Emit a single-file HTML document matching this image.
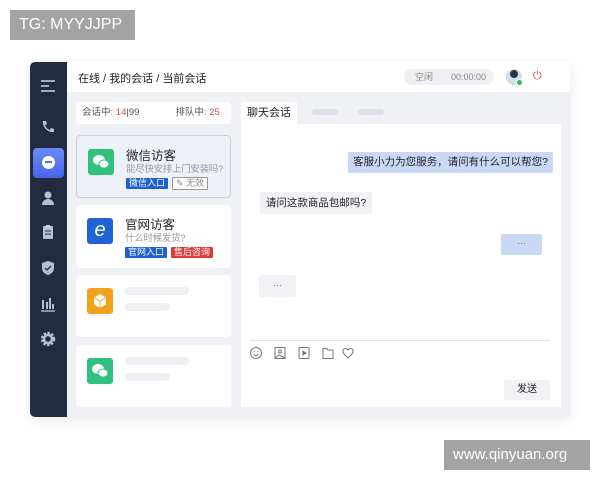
<!DOCTYPE html>
<html><head><meta charset="utf-8"><style>
*{margin:0;padding:0;box-sizing:border-box}
body{width:600px;height:480px;background:#fff;font-family:"Liberation Sans","Noto Sans CJK SC",sans-serif;position:relative;overflow:hidden;color:#333}
.a{position:absolute}
.wm{background:#a3a3a3;color:#fff;font-size:16px;line-height:30px}
.win{left:30px;top:62px;width:540px;height:355px;background:#eff1f5;border-radius:5px;box-shadow:0 4px 14px rgba(0,0,0,.08);overflow:hidden}
.side{left:0;top:0;width:37px;height:355px;background:#222c41}
.card{background:#fff;border-radius:4px;left:46px;width:155px}
.ic{width:26px;height:26px;border-radius:3px;left:11px}
.t1{font-size:12.5px;color:#222;left:49px;white-space:nowrap}
.t2{font-size:9.5px;color:#999;left:49px;white-space:nowrap;letter-spacing:-0.3px}
.tag{font-size:9px;color:#fff;line-height:11px;padding:0 3px;border-radius:1px;white-space:nowrap}
.sk{background:#eef0f3;height:8px;border-radius:4px;left:49px}
.si{left:10px;width:16px;height:16px}
</style></head><body>
<div class="a wm" style="left:10px;top:10px;width:125px;padding-left:9px">TG: MYYJJPP</div>
<div class="a wm" style="left:444px;top:440px;width:146px;padding-left:9px;font-size:15px">www.qinyuan.org</div>
<div class="a win">
 <div class="a" style="left:37px;top:0;width:503px;height:30px;background:#fff"></div>
 <div class="a" style="left:48px;top:8px;font-size:11px;color:#222">在线 / 我的会话 / 当前会话</div>
 <div class="a" style="left:374px;top:7px;width:90px;height:16px;border-radius:8px;background:#eef0f3;font-size:9px;color:#888;line-height:16px"><span style="margin-left:11px">空闲</span><span style="margin-left:18px">00:00:00</span></div>
 <div class="a" style="left:476px;top:7px;width:16px;height:16px;border-radius:50%;background:#cfe0f0"></div>
 <div class="a" style="left:480px;top:8px;width:8px;height:8px;border-radius:50%;background:#2b3447"></div>
 <div class="a" style="left:486px;top:17px;width:7px;height:7px;border-radius:50%;background:#3cb45a;border:1px solid #fff"></div>
 <div class="a" style="left:503px;top:8px;font-size:11px;color:#c44">⏻</div>
 <div class="a side">
  <svg class="a" style="left:10px;top:17px" width="16" height="14"><path d="M1 2h14M1 7h8M1 12h14" stroke="#cdd3de" stroke-width="1.6"/></svg>
  <svg class="a si" style="top:57px" viewBox="0 0 16 16"><path d="M3 2l3 0 1 3-2 1.5c1 2 2.5 3.5 4.5 4.5L11 9l3 1v3c-6 1-12-5-11-11z" fill="#b8c0cf"/></svg>
  <div class="a" style="left:3px;top:86px;width:31px;height:30px;border-radius:4px;background:linear-gradient(#6b8af7,#4a64e8)"></div>
  <div class="a" style="left:12px;top:94px;width:13px;height:13px;border-radius:50%;background:#fff"></div>
  <div class="a" style="left:15px;top:99px;width:7px;height:1.5px;background:#5670ee"></div>
  <svg class="a si" style="top:128px" viewBox="0 0 16 16"><circle cx="8" cy="5" r="3.5" fill="#b8c0cf"/><path d="M2 15c0-4 3-6 6-6s6 2 6 6z" fill="#b8c0cf"/></svg>
  <svg class="a si" style="top:162px" viewBox="0 0 16 16"><rect x="3" y="2" width="10" height="13" rx="1" fill="#b8c0cf"/><rect x="6" y="1" width="4" height="3" fill="#cdd3de"/><path d="M5 7h6M5 10h6" stroke="#222c41"/></svg>
  <svg class="a si" style="top:198px" viewBox="0 0 16 16"><path d="M8 1l6 2v5c0 4-3 6-6 7-3-1-6-3-6-7V3z" fill="#b8c0cf"/><path d="M5 8l2 2 4-4" stroke="#222c41" fill="none" stroke-width="1.3"/></svg>
  <svg class="a si" style="top:234px" viewBox="0 0 16 16"><path d="M3 4v9M7 6v7M10 2v11M13 8v5" stroke="#b8c0cf" stroke-width="2"/><path d="M1 15h14" stroke="#b8c0cf" stroke-width="1.4"/></svg>
  <svg class="a si" style="top:269px" viewBox="0 0 16 16"><circle cx="8" cy="8" r="5.5" fill="none" stroke="#b8c0cf" stroke-width="3.5" stroke-dasharray="2.2 1.4"/><circle cx="8" cy="8" r="4" fill="none" stroke="#b8c0cf" stroke-width="2.5"/></svg>
 </div>
 <div class="a" style="left:46px;top:40px;width:155px;height:22px;background:#fff;border-radius:3px;font-size:9.5px;color:#555;line-height:22px"><span style="margin-left:6px">会话中: <span style="color:#c55">14</span>|99</span><span style="margin-left:36px">排队中: <span style="color:#c55">25</span></span></div>
 <div class="a card" style="top:73px;height:63px;background:#eef1f8;border:1px solid #c9cfdc">
  <div class="a ic" style="top:13px;background:#2ec27e"><svg width="26" height="26"><ellipse cx="11" cy="11" rx="6" ry="5" fill="#fff"/><ellipse cx="16" cy="15" rx="5" ry="4" fill="#fff" stroke="#2ec27e"/></svg></div>
  <div class="a t1" style="top:9px">微信访客</div>
  <div class="a t2" style="top:25px">能尽快安排上门安装吗?</div>
  <div class="a tag" style="left:49px;top:42px;background:#1f5fd0">微信入口</div>
  <div class="a tag" style="left:95px;top:41px;color:#888;border:1px solid #999;background:#fff">✎ 无效</div>
 </div>
 <div class="a card" style="top:143px;height:63px">
  <div class="a ic" style="top:13px;background:#1f63d6;color:#fff;font-size:20px;font-style:italic;text-align:center;line-height:24px">e</div>
  <div class="a t1" style="top:9px">官网访客</div>
  <div class="a t2" style="top:25px">什么时候发货?</div>
  <div class="a tag" style="left:49px;top:42px;background:#1f5fd0">官网入口</div>
  <div class="a tag" style="left:95px;top:42px;background:#dd3a3a">售后咨询</div>
 </div>
 <div class="a card" style="top:213px;height:62px">
  <div class="a ic" style="top:13px;background:#f3a21c"><svg width="26" height="26"><path d="M13 6l6 3.5v7L13 20l-6-3.5v-7z" fill="#fff"/><path d="M7 9.5l6 3.5 6-3.5M13 13v7" stroke="#f3a21c" fill="none"/></svg></div>
  <div class="a sk" style="top:12px;width:64px"></div><div class="a sk" style="top:28px;width:45px"></div>
 </div>
 <div class="a card" style="top:283px;height:62px">
  <div class="a ic" style="top:13px;background:#2ec27e"><svg width="26" height="26"><ellipse cx="11" cy="11" rx="6" ry="5" fill="#fff"/><ellipse cx="16" cy="15" rx="5" ry="4" fill="#fff" stroke="#2ec27e"/></svg></div>
  <div class="a sk" style="top:12px;width:64px"></div><div class="a sk" style="top:28px;width:45px"></div>
 </div>
 <div class="a" style="left:211px;top:40px;width:56px;height:22px;background:#fff;font-size:11px;line-height:22px;text-align:center;color:#222">聊天会话</div>
 <div class="a" style="left:282px;top:47px;width:26px;height:6px;background:#dde0e6;border-radius:3px"></div>
 <div class="a" style="left:328px;top:47px;width:26px;height:6px;background:#dde0e6;border-radius:3px"></div>
 <div class="a" style="left:211px;top:62px;width:320px;height:283px;background:#fff"></div>
 <div class="a" style="left:318px;top:90px;width:205px;height:21px;background:#c9d8f5;border-radius:2px;font-size:10.5px;line-height:21px;text-align:center;color:#222">客服小力为您服务，请问有什么可以帮您?</div>
 <div class="a" style="left:230px;top:130px;width:112px;height:22px;background:#f1f2f5;border-radius:2px;font-size:10.5px;line-height:22px;text-align:center;color:#222">请问这款商品包邮吗?</div>
 <div class="a" style="left:471px;top:172px;width:41px;height:21px;background:#c9d8f5;border-radius:2px;font-size:9px;line-height:19px;text-align:center;color:#667">···</div>
 <div class="a" style="left:229px;top:213px;width:37px;height:22px;background:#f1f2f5;border-radius:2px;font-size:9px;line-height:20px;text-align:center;color:#667">···</div>
 <div class="a" style="left:220px;top:278px;width:300px;height:1px;background:#e3e5ea"></div>
 <svg class="a" style="left:219px;top:284px" width="110" height="14" fill="none" stroke="#777" stroke-width="1">
  <circle cx="7" cy="7" r="5.5"/><path d="M4.5 8.5c1.5 1.5 3.5 1.5 5 0M5 5.5v.5M9 5.5v.5"/>
  <rect x="26" y="1.5" width="10" height="11"/><circle cx="31" cy="5.5" r="1.5"/><path d="M26 12l4-3 6 3"/>
  <rect x="50" y="1.5" width="10" height="11" rx="1"/><path d="M54 5v4l3-2z" fill="#777"/>
  <path d="M74 2.5h4l1 1.5h5v8.5h-10z"/>
  <path d="M104 4c-1-2-4-2-5 0-1-2-4-2-5 0-1 3 3 6 5 8 2-2 6-5 5-8z"/>
 </svg>
 <div class="a" style="left:474px;top:318px;width:46px;height:20px;background:#f1f2f5;border-radius:2px;font-size:10px;line-height:20px;text-align:center;color:#222">发送</div>
</div>
</body></html>
